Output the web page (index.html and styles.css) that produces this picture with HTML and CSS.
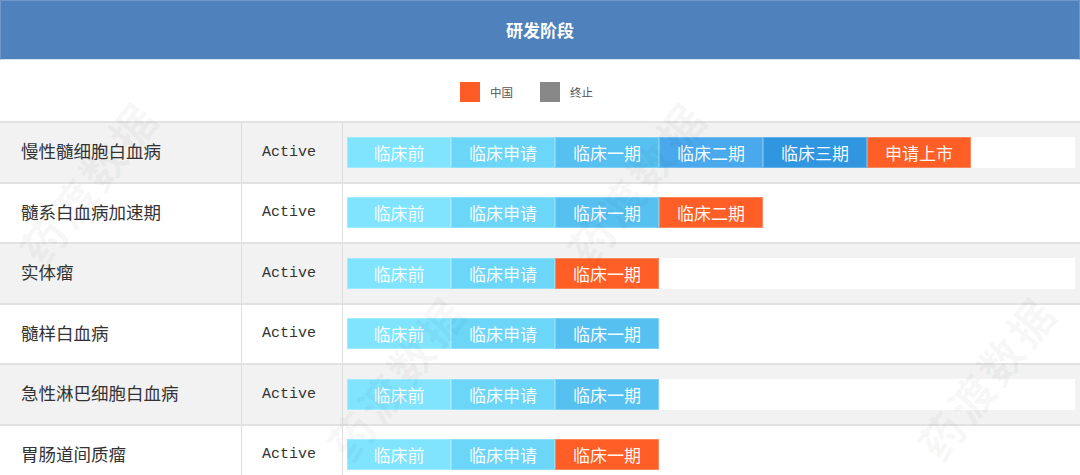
FILE: index.html
```html
<!DOCTYPE html>
<html lang="zh">
<head>
<meta charset="utf-8">
<title>研发阶段</title>
<link rel="stylesheet" href="styles.css">
</head>
<body>
<div class="page">
  <header class="title">研发阶段</header>
  <div class="legend">
    <span class="legend-item"><i class="swatch swatch-cn"></i>中国</span>
    <span class="legend-item"><i class="swatch swatch-stop"></i>终止</span>
  </div>
  <div class="table">
    <div class="row alt">
      <div class="cell name">慢性髓细胞白血病</div>
      <div class="cell status">Active</div>
      <div class="cell bar-cell"><div class="track">
        <span class="seg s1">临床前</span><span class="seg s2">临床申请</span><span class="seg s3">临床一期</span><span class="seg s4">临床二期</span><span class="seg s5">临床三期</span><span class="seg cn">申请上市</span>
      </div></div>
    </div>
    <div class="row">
      <div class="cell name">髓系白血病加速期</div>
      <div class="cell status">Active</div>
      <div class="cell bar-cell"><div class="track">
        <span class="seg s1">临床前</span><span class="seg s2">临床申请</span><span class="seg s3">临床一期</span><span class="seg cn">临床二期</span>
      </div></div>
    </div>
    <div class="row alt">
      <div class="cell name">实体瘤</div>
      <div class="cell status">Active</div>
      <div class="cell bar-cell"><div class="track">
        <span class="seg s1">临床前</span><span class="seg s2">临床申请</span><span class="seg cn">临床一期</span>
      </div></div>
    </div>
    <div class="row">
      <div class="cell name">髓样白血病</div>
      <div class="cell status">Active</div>
      <div class="cell bar-cell"><div class="track">
        <span class="seg s1">临床前</span><span class="seg s2">临床申请</span><span class="seg s3">临床一期</span>
      </div></div>
    </div>
    <div class="row alt">
      <div class="cell name">急性淋巴细胞白血病</div>
      <div class="cell status">Active</div>
      <div class="cell bar-cell"><div class="track">
        <span class="seg s1">临床前</span><span class="seg s2">临床申请</span><span class="seg s3">临床一期</span>
      </div></div>
    </div>
    <div class="row">
      <div class="cell name">胃肠道间质瘤</div>
      <div class="cell status">Active</div>
      <div class="cell bar-cell"><div class="track">
        <span class="seg s1">临床前</span><span class="seg s2">临床申请</span><span class="seg cn">临床一期</span>
      </div></div>
    </div>
  </div>
  <div class="watermark wm1">药渡数据</div>
  <div class="watermark wm2">药渡数据</div>
  <div class="watermark wm3">药渡数据</div>
  <div class="watermark wm4">药渡数据</div>
</div>
</body>
</html>
```
FILE: styles.css
```css
* { box-sizing: border-box; }
html, body { margin: 0; padding: 0; background: #fff; }
body { font-family: "Noto Sans CJK SC", "Noto Sans", sans-serif; }
.page { position: relative; width: 1080px; height: 475px; overflow: hidden; }

.title {
  height: 60px;
  background: #4f81bd;
  border: 1px solid #6e98cc;
  border-bottom-color: #d8e2ee;
  color: #fff;
  font-size: 17px;
  font-weight: bold;
  display: flex;
  align-items: center;
  justify-content: center;
  padding-bottom: 2px;
}

.legend {
  height: 61px;
  display: flex;
  align-items: center;
  justify-content: center;
  gap: 27px;
  padding-right: 27px;
  padding-top: 2px;
  font-size: 11.5px;
  color: #555;
}
.legend-item { display: flex; align-items: center; gap: 10px; }
.swatch { display: block; width: 20px; height: 20px; }
.swatch-cn { background: #ff5b26; }
.swatch-stop { background: #888888; }

.table { display: flex; flex-direction: column; }
.row {
  display: grid;
  grid-template-columns: 242px 101px 1fr;
  height: 60.5px;
  border-top: 2px solid #e2e2e2;
  background: #fff;
}
.row.alt { background: #f2f2f2; }
.cell { display: flex; align-items: center; }
.name {
  padding-left: 21px;
  padding-bottom: 3px;
  font-size: 17.5px;
  color: #333;
  border-right: 1px solid #dedede;
}
.status {
  justify-content: center;
  padding-right: 6px;
  font-family: "Liberation Mono", "DejaVu Sans Mono", monospace;
  font-size: 15px;
  color: #333;
  border-right: 1px solid #dedede;
}
.bar-cell { padding: 0 5px 0 4px; }
.track {
  width: 100%;
  height: 31px;
  background: #fff;
  display: flex;
}
.seg {
  width: calc(100% / 7);
  height: 100%;
  display: flex;
  align-items: center;
  justify-content: center;
  color: rgba(255,255,255,0.95);
  font-size: 17px;
  border: 1px solid rgba(255,255,255,0.25);
}
.s1 { background: #80e4ff; }
.s2 { background: #6cd6f8; }
.s3 { background: #56c0f1; }
.s4 { background: #49a9ec; }
.s5 { background: #2f96df; }
.cn { background: #ff5f27; }

.watermark {
  position: absolute;
  font-size: 44px;
  font-weight: bold;
  color: rgba(0,0,0,0.04);
  white-space: nowrap;
  transform: rotate(-52deg);
  pointer-events: none;
  letter-spacing: 4px;
}
.wm1 { left: -8px; top: 150px; }
.wm2 { left: 540px; top: 150px; }
.wm3 { left: 890px; top: 345px; }
.wm4 { left: 300px; top: 345px; }
```
